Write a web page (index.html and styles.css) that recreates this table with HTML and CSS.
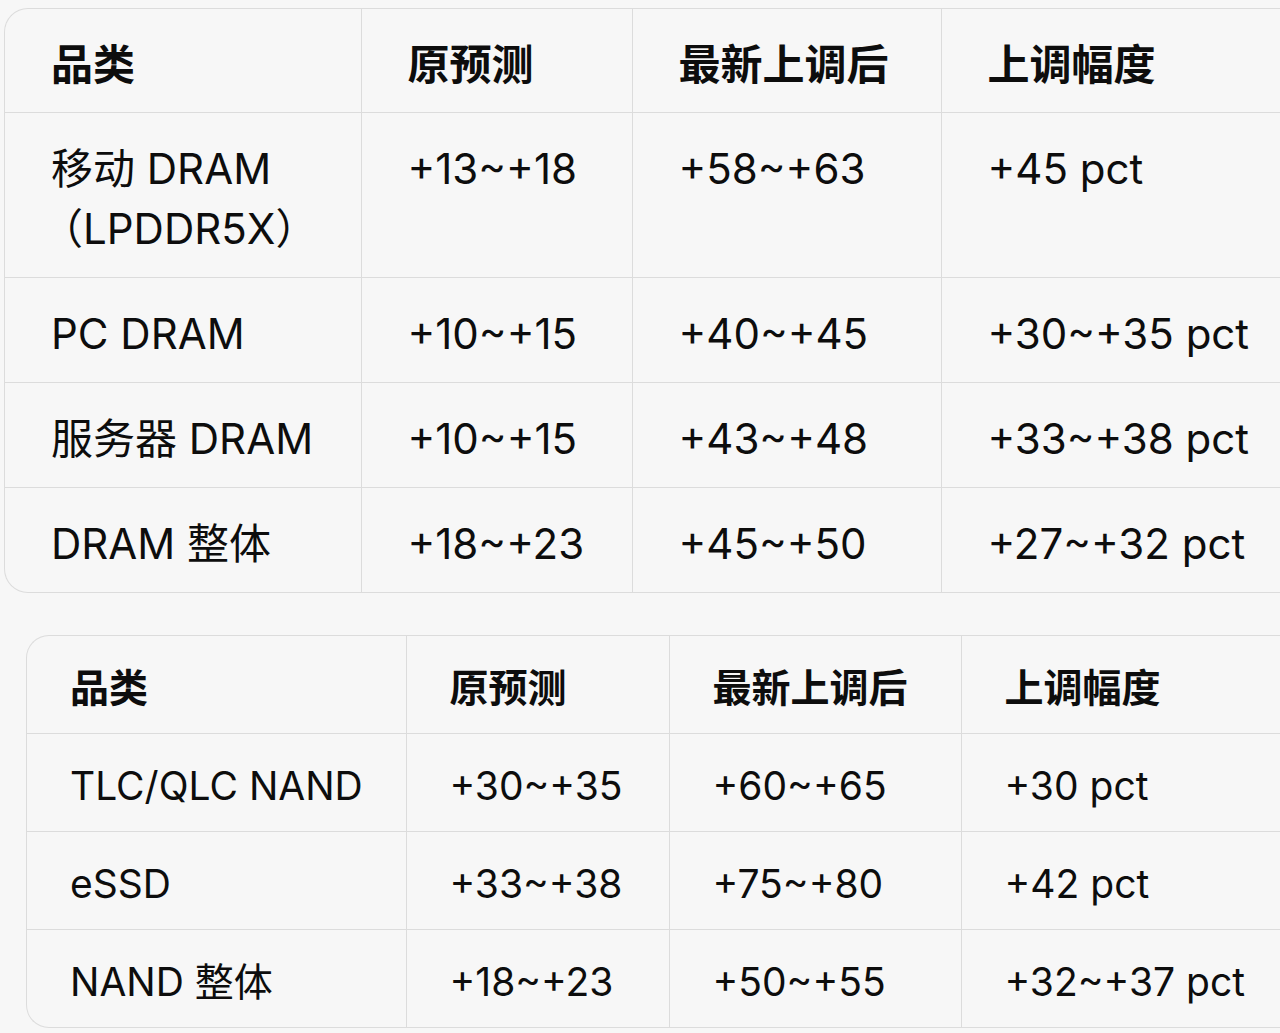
FILE: index.html
```html
<!DOCTYPE html>
<html lang="zh">
<head>
<meta charset="utf-8">
<title>上调幅度</title>
<link rel="stylesheet" href="styles.css">
</head>
<body>
<div class="page">
  <div class="card card-dram">
    <table class="grid grid-lg">
      <colgroup>
        <col class="c1"><col class="c2"><col class="c3"><col class="c4">
      </colgroup>
      <thead>
        <tr><th>品类</th><th>原预测</th><th>最新上调后</th><th>上调幅度</th></tr>
      </thead>
      <tbody>
        <tr><td>移动 DRAM<br><span class="paren">（LPDDR5X）</span></td><td>+13~+18</td><td>+58~+63</td><td>+45 pct</td></tr>
        <tr><td>PC DRAM</td><td>+10~+15</td><td>+40~+45</td><td>+30~+35 pct</td></tr>
        <tr><td>服务器 DRAM</td><td>+10~+15</td><td>+43~+48</td><td>+33~+38 pct</td></tr>
        <tr><td>DRAM 整体</td><td>+18~+23</td><td>+45~+50</td><td>+27~+32 pct</td></tr>
      </tbody>
    </table>
  </div>
  <div class="card card-nand">
    <table class="grid grid-sm">
      <colgroup>
        <col class="c1"><col class="c2"><col class="c3"><col class="c4">
      </colgroup>
      <thead>
        <tr><th>品类</th><th>原预测</th><th>最新上调后</th><th>上调幅度</th></tr>
      </thead>
      <tbody>
        <tr><td>TLC/QLC NAND</td><td>+30~+35</td><td>+60~+65</td><td>+30 pct</td></tr>
        <tr><td>eSSD</td><td>+33~+38</td><td>+75~+80</td><td>+42 pct</td></tr>
        <tr><td>NAND 整体</td><td>+18~+23</td><td>+50~+55</td><td>+32~+37 pct</td></tr>
      </tbody>
    </table>
  </div>
</div>
</body>
</html>
```

FILE: styles.css
```css
html, body {
  margin: 0;
  padding: 0;
  background: #f7f7f7;
  overflow: hidden;
}

.page {
  width: 1400px;
  display: flex;
  flex-direction: column;
  align-items: flex-start;
  font-family: "Inter", "Noto Sans CJK SC", sans-serif;
  color: #0d0d0d;
}

.card {
  background: #f7f7f7;
  border: 1px solid #dcdcdc;
  border-right: none;
  overflow: hidden;
}

.card-dram {
  margin: 8px 0 0 4px;
  border-radius: 24px 0 0 24px;
}

.card-nand {
  margin: 42px 0 0 26px;
  border-radius: 23px 0 0 23px;
}

.grid {
  border-collapse: collapse;
  table-layout: fixed;
}

.grid th,
.grid td {
  text-align: left;
  vertical-align: top;
  white-space: nowrap;
  border-right: 1px solid #dcdcdc;
  border-bottom: 1px solid #dcdcdc;
}

.grid tr:last-child td {
  border-bottom: none;
}

.grid th {
  font-weight: 700;
}

.grid td {
  font-weight: 400;
}

.paren {
  margin-left: -10px;
}

/* DRAM table */
.grid-lg {
  width: 1300px;
  font-size: 42px;
  line-height: 60px;
}
.grid-lg th,
.grid-lg td {
  padding: 26px 20px 17px 46px;
}
.grid-lg td {
  padding-bottom: 18px;
}
.grid-lg .c1 { width: 356px; }
.grid-lg .c2 { width: 271px; }
.grid-lg .c3 { width: 309px; }
.grid-lg .c4 { width: 364px; }

/* NAND table */
.grid-sm {
  width: 1280px;
  font-size: 39px;
  line-height: 56px;
}
.grid-sm th,
.grid-sm td {
  padding: 24px 10px 17px 43px;
}
.grid-sm .c1 { width: 379px; }
.grid-sm .c2 { width: 263px; }
.grid-sm .c3 { width: 292px; }
.grid-sm .c4 { width: 346px; }
```
